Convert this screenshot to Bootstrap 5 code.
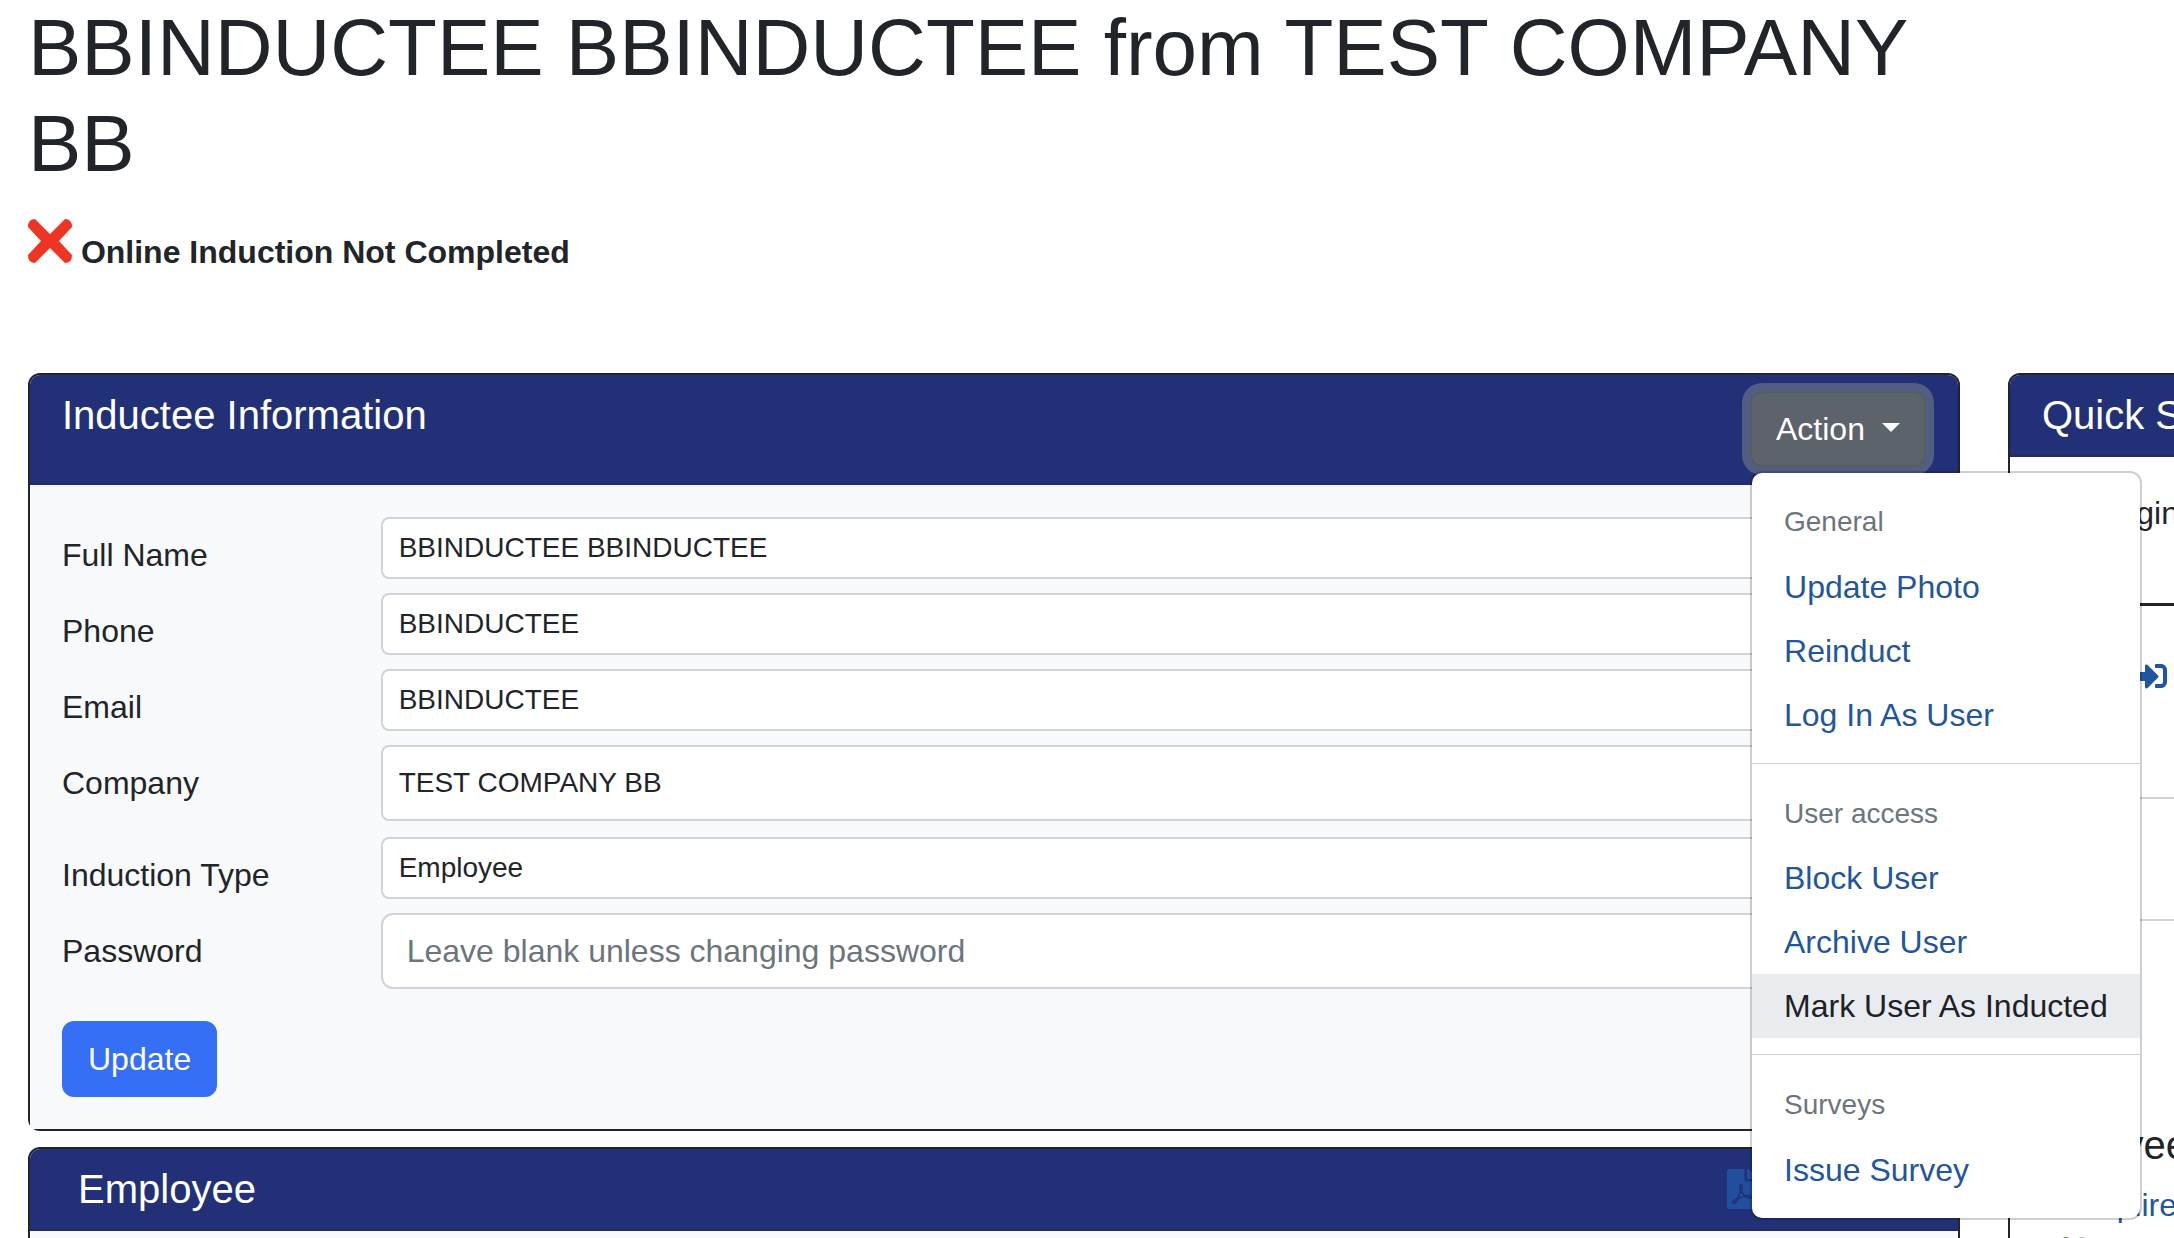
<!DOCTYPE html>
<html>

<head>
    <meta charset="UTF-8">
    <title>Inductee</title>
    <link href="https://cdn.jsdelivr.net/npm/bootstrap@5.3.0/dist/css/bootstrap.min.css" rel="stylesheet">
    <style>
        :root {
            --bs-border-width: 2px;
            --bs-border-color: #ced4da;
            --bs-border-color-translucent: rgba(0, 0, 0, .19);
        }

        html {
            font-size: 32px;
        }

        body {
            font-family: "Liberation Sans", Arial, sans-serif;
            color: #212529;
            overflow: hidden;
        }

        .page-wrap {
            width: 2648px;
            padding: 0 28px;
        }

        .page-title {
            font-size: 80px;
            line-height: 96px;
            max-width: 1931px;
            margin: 0 0 27px;
            font-weight: 400;
        }

        .induct-status {
            line-height: 48px;
            margin-bottom: 97px;
        }

        .cross-icon {
            width: 44px;
            height: 44px;
            vertical-align: baseline;
        }

        .panel-head {
            background-color: #223177;
            color: #fff;
            border-bottom-color: #1f2c6c;
        }

        .panel-title {
            font-size: 40px;
            line-height: 48px;
            margin: 0;
        }

        .panel-body {
            background-color: #f8f9fa;
        }

        .btn-action {
            background-color: #5c636a;
            border-color: #565e64;
            color: #fff;
            box-shadow: 0 0 0 8px rgba(130, 138, 145, .5);
        }

        .action-menu {
            top: 100%;
            left: 0;
            margin-top: 4px;
        }

        .action-menu .dropdown-divider {
            margin-bottom: 17px;
        }

        .action-menu .dropdown-item {
            color: #1f569f;
        }

        .action-menu .dropdown-item.item-hover {
            background-color: #e9ecef;
            color: #1e2125;
        }

        .tall-input {
            height: 76px;
        }

        .form-control::placeholder {
            color: #6c757d;
        }

        .btn-update {
            background-color: #346ff6;
            border-color: #346ff6;
            color: #fff;
        }

        .pdf-icon {
            width: 30px;
            height: 40px;
            margin-right: 153px;
            fill: #1f4f9e;
        }

        .login-table {
            --bs-table-bg: transparent;
        }

        .login-table thead th {
            font-weight: 400;
            width: 190px;
            height: 131px;
            vertical-align: top;
            border-bottom: 3px solid #212529;
        }

        .login-table td {
            vertical-align: top;
        }

        .row-one {
            height: 194px;
        }

        .row-two {
            height: 122px;
        }

        .login-icon {
            width: 32px;
            height: 32px;
            fill: #1f569f;
            margin: 38px 0 0 93px;
            display: block;
        }

        .side-block {
            margin: 200px 0 0 -16px;
            padding-bottom: 120px;
        }

        .side-heading {
            font-size: 40px;
            line-height: 48px;
            margin: 0 0 12px;
            white-space: nowrap;
        }

        .side-link {
            display: block;
            margin-left: 55px;
            color: #1f569f;
            text-decoration: none;
            white-space: nowrap;
        }

        .status-dots {
            margin: 8px 0 0 52px;
        }

        .status-dot {
            width: 8px;
            height: 8px;
            border-radius: 50%;
            background-color: #3c8f3a;
        }

        .status-dot.dot-grey {
            background-color: #adb5bd;
        }
    </style>
</head>

<body>
    <div class="page-wrap">
        <h1 class="page-title">BBINDUCTEE BBINDUCTEE from TEST COMPANY BB</h1>
        <div class="induct-status">
            <svg class="cross-icon" viewBox="0 0 44 44"><path d="M7 0 L22 15 L37 0 Q44 0 44 8 L31 22 L44 36 Q44 44 37 44 L22 29 L7 44 Q0 44 0 36 L13 22 L0 8 Q0 0 7 0 Z" fill="#ee3524"/></svg>
            <strong>Online Induction Not Completed</strong>
        </div>

        <div class="row">
            <div class="col-9">
                <div class="card border-dark mb-2">
                    <div class="card-header panel-head d-flex justify-content-between align-items-start">
                        <h5 class="panel-title">Inductee Information</h5>
                        <div class="dropdown">
                            <button class="btn btn-action dropdown-toggle" type="button">Action </button>
                            <ul class="dropdown-menu show action-menu">
                                <li><h6 class="dropdown-header">General</h6></li>
                                <li><a class="dropdown-item" href="#">Update Photo</a></li>
                                <li><a class="dropdown-item" href="#">Reinduct</a></li>
                                <li><a class="dropdown-item" href="#">Log In As User</a></li>
                                <li><hr class="dropdown-divider"></li>
                                <li><h6 class="dropdown-header">User access</h6></li>
                                <li><a class="dropdown-item" href="#">Block User</a></li>
                                <li><a class="dropdown-item" href="#">Archive User</a></li>
                                <li><a class="dropdown-item item-hover" href="#">Mark User As Inducted</a></li>
                                <li><hr class="dropdown-divider"></li>
                                <li><h6 class="dropdown-header">Surveys</h6></li>
                                <li><a class="dropdown-item" href="#">Issue Survey</a></li>
                            </ul>
                        </div>
                    </div>
                    <div class="card-body panel-body">
                        <form>
                            <div class="row">
                                <label class="col-sm-2 col-form-label">Full Name</label>
                                <div class="col-sm-10"><input type="text" class="form-control form-control-sm" value="BBINDUCTEE BBINDUCTEE"></div>
                            </div>
                            <div class="row">
                                <label class="col-sm-2 col-form-label">Phone</label>
                                <div class="col-sm-10"><input type="text" class="form-control form-control-sm" value="BBINDUCTEE"></div>
                            </div>
                            <div class="row">
                                <label class="col-sm-2 col-form-label">Email</label>
                                <div class="col-sm-10"><input type="text" class="form-control form-control-sm" value="BBINDUCTEE"></div>
                            </div>
                            <div class="row mb-2">
                                <label class="col-sm-2 col-form-label">Company</label>
                                <div class="col-sm-10"><input type="text" class="form-control form-control-sm tall-input" value="TEST COMPANY BB"></div>
                            </div>
                            <div class="row">
                                <label class="col-sm-2 col-form-label">Induction Type</label>
                                <div class="col-sm-10"><input type="text" class="form-control form-control-sm" value="Employee"></div>
                            </div>
                            <div class="row mb-3">
                                <label class="col-sm-2 col-form-label">Password</label>
                                <div class="col-sm-10"><input type="password" class="form-control" placeholder="Leave blank unless changing password"></div>
                            </div>
                            <button type="button" class="btn btn-update">Update</button>
                        </form>
                    </div>
                </div>

                <div class="card border-dark">
                    <div class="card-header panel-head px-4 d-flex justify-content-between align-items-center">
                        <h5 class="panel-title">Employee</h5>
                        <svg class="pdf-icon" viewBox="0 0 384 512"><path d="M181.9 256.1c-5-16-4.9-46.9-2-46.9 8.4 0 7.6 36.9 2 46.9zm-1.7 47.2c-7.7 20.2-17.3 43.3-28.4 62.7 18.3-7 39-17.2 62.9-21.9-12.7-9.6-24.9-23.4-34.5-40.8zM86.1 428.1c0 .8 13.2-5.4 34.9-40.2-6.7 6.3-29.1 24.5-34.9 40.2zM248 160h136v328c0 13.3-10.7 24-24 24H24c-13.3 0-24-10.7-24-24V24C0 10.7 10.7 0 24 0h200v136c0 13.2 10.8 24 24 24zm-8 171.8c-20-12.2-33.3-29-42.7-53.8 4.5-18.5 11.6-46.6 6.2-64.2-4.7-29.4-42.4-26.5-47.8-6.8-5 18.3-.4 44.1 8.1 77-11.6 27.6-28.7 64.6-40.8 85.8-.1 0-.1.1-.2.1-27.1 13.9-73.6 44.5-54.5 68 5.6 6.9 16 10 21.5 10 17.9 0 35.7-18 61.1-61.8 25.8-8.5 54.1-19.1 79-23.2 21.7 11.8 47.1 19.5 64 19.5 29.2 0 31.2-32 19.7-43.4-13.9-13.6-54.3-9.7-73.6-7.2zM377 105L279 7c-4.5-4.5-10.6-7-17-7h-6v128h128v-6.1c0-6.3-2.5-12.4-7-16.9zm-74.1 255.3c4.1-2.7-2.5-11.9-42.8-9 37.1 15.8 42.8 9 42.8 9z"/></svg>
                    </div>
                    <div class="card-body panel-body"></div>
                </div>
            </div>

            <div class="col-3">
                <div class="card border-dark">
                    <div class="card-header panel-head">
                        <h5 class="panel-title text-nowrap">Quick Search</h5>
                    </div>
                    <div class="card-body p-2">
                        <table class="table login-table mb-0">
                            <thead>
                                <tr><th>Last login</th><th>Date</th></tr>
                            </thead>
                            <tbody>
                                <tr class="row-one">
                                    <td>
                                        <svg class="login-icon" viewBox="0 0 512 512"><path d="M416 448h-84c-6.6 0-12-5.4-12-12v-40c0-6.6 5.4-12 12-12h84c17.7 0 32-14.3 32-32V160c0-17.7-14.3-32-32-32h-84c-6.6 0-12-5.4-12-12V76c0-6.6 5.4-12 12-12h84c53 0 96 43 96 96v192c0 53-43 96-96 96zm-47-201L201 79c-15-15-41-4.5-41 17v96H24c-13.3 0-24 10.7-24 24v96c0 13.3 10.7 24 24 24h136v96c0 21.5 26 32 41 17l168-168c9.3-9.4 9.3-24.6 0-34z"/></svg>
                                    </td>
                                    <td></td>
                                </tr>
                                <tr class="row-two"><td></td><td></td></tr>
                            </tbody>
                        </table>
                        <div class="side-block">
                            <h5 class="side-heading">Employee</h5>
                            <a class="side-link" href="#">Required</a>
                            <div class="status-dots d-flex gap-1">
                                <span class="status-dot"></span>
                                <span class="status-dot dot-grey"></span>
                            </div>
                        </div>
                    </div>
                </div>
            </div>
        </div>
    </div>

    <script src="https://cdn.jsdelivr.net/npm/bootstrap@5.3.0/dist/js/bootstrap.bundle.min.js"></script>
</body>

</html>
